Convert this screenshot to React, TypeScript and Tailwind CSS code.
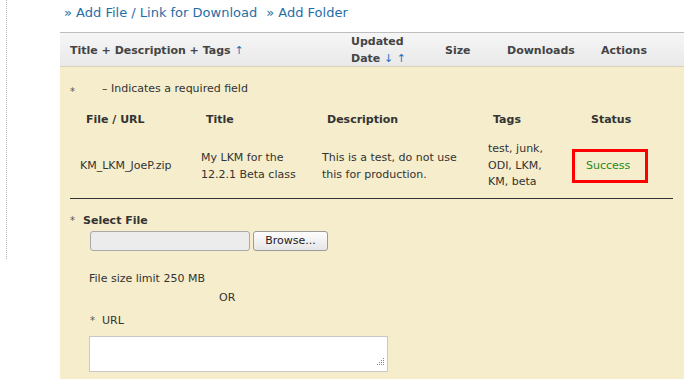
import React from "react";

const font = { fontFamily: '"DejaVu Sans", Verdana, sans-serif' };

export default function App() {
  return (
    <div className="flex w-[695px] h-[379px] bg-white overflow-hidden text-[11px] text-[#333]" style={font}>
      <div className="w-[7px] h-[259px] border-r border-dotted border-[#b5b5b5] shrink-0" />
      <div className="ml-[53px] w-[624px] flex flex-col">
        <div className="pt-[4px] pl-[4px] leading-[18px] text-[13px] text-[#1f6ea6] flex gap-[9px]">
          <span>» Add File / Link for Download</span>
          <span>» Add Folder</span>
        </div>
        <div className="mt-[10px] border-t border-[#bdbdbd] border-b border-b-[#d9d2b8] h-[35px] bg-gradient-to-b from-[#f6f6f6] to-[#e9e9e9] grid grid-cols-[281px_94px_62px_94px_93px] items-center font-bold text-[#444] leading-[17px]">
          <div className="pl-[10px]">Title + Description + Tags <span className="font-normal text-[#1a73c0]">↑</span></div>
          <div className="pl-[10px]">Updated<br />Date <span className="font-normal text-[#1a73c0]">↓ ↑</span></div>
          <div className="pl-[10px]">Size</div>
          <div className="pl-[10px]">Downloads</div>
          <div className="pl-[10px]">Actions</div>
        </div>
        <div className="flex-1 bg-[#f5edcc] pl-[10px] leading-[17px]">
          <div className="pt-[13px] flex items-start">
            <span className="w-[32px] text-[10px] text-[#555] relative top-[3px]">*</span>
            <span>– Indicates a required field</span>
          </div>
          <div className="w-[603px]">
            <div className="mt-[14px] grid grid-cols-[121px_121px_166px_84px_111px] font-bold">
              <div className="pl-[16px]">File / URL</div>
              <div className="pl-[15px]">Title</div>
              <div className="pl-[15px]">Description</div>
              <div className="pl-[15px]">Tags</div>
              <div className="pl-[29px]">Status</div>
            </div>
            <div className="pt-[13px] pb-[7px] grid grid-cols-[121px_121px_166px_84px_111px] items-center border-b border-[#333]">
              <div className="pl-[10px]">KM_LKM_JoeP.zip</div>
              <div className="pl-[10px]">My LKM for the<br />12.2.1 Beta class</div>
              <div className="pl-[10px]">This is a test, do not use<br />this for production.</div>
              <div className="pl-[10px] leading-[16.5px]">test, junk,<br />ODI, LKM,<br />KM, beta</div>
              <div className="pl-[10px]">
                <div className="w-[76px] h-[34px] border-[3px] border-[#ff0000] flex items-center pl-[11px] text-[#1f8a1f]">Success</div>
              </div>
            </div>
          </div>
          <div className="mt-[13px] flex items-center">
            <span className="w-[13px] text-[10px] text-[#555]">*</span>
            <span className="font-bold">Select File</span>
          </div>
          <div className="mt-[2px] ml-[20px] flex items-center gap-[3px]">
            <div className="w-[160px] h-[20px] bg-[#ececec] border border-[#a9a9a9] rounded-[3px]" />
            <div className="w-[75px] h-[20px] border border-[#9a9a9a] rounded-[3px] bg-gradient-to-b from-[#fdfdfd] to-[#e6e6e6] flex items-center justify-center text-[#222]">Browse...</div>
          </div>
          <div className="mt-[19px] ml-[19px]">File size limit 250 MB</div>
          <div className="mt-[2px] ml-[149px]">OR</div>
          <div className="mt-[6px] ml-[20px] flex items-center">
            <span className="w-[12px] text-[10px] text-[#555]">*</span>
            <span>URL</span>
          </div>
          <div className="mt-[7px] ml-[19px] relative w-[299px] h-[36px] bg-white border border-[#c8c8c8]">
            <svg className="absolute right-[2px] bottom-[3px]" width="10" height="10" viewBox="0 0 10 10">
              <rect x="8" y="0" width="1" height="1" fill="#888" />
              <rect x="8" y="2" width="1" height="1" fill="#888" />
              <rect x="6" y="2" width="1" height="1" fill="#888" />
              <rect x="8" y="4" width="1" height="1" fill="#888" />
              <rect x="6" y="4" width="1" height="1" fill="#888" />
              <rect x="4" y="4" width="1" height="1" fill="#888" />
              <rect x="8" y="6" width="1" height="1" fill="#888" />
              <rect x="6" y="6" width="1" height="1" fill="#888" />
              <rect x="4" y="6" width="1" height="1" fill="#888" />
              <rect x="2" y="6" width="1" height="1" fill="#888" />
            </svg>
          </div>
        </div>
      </div>
    </div>
  );
}
